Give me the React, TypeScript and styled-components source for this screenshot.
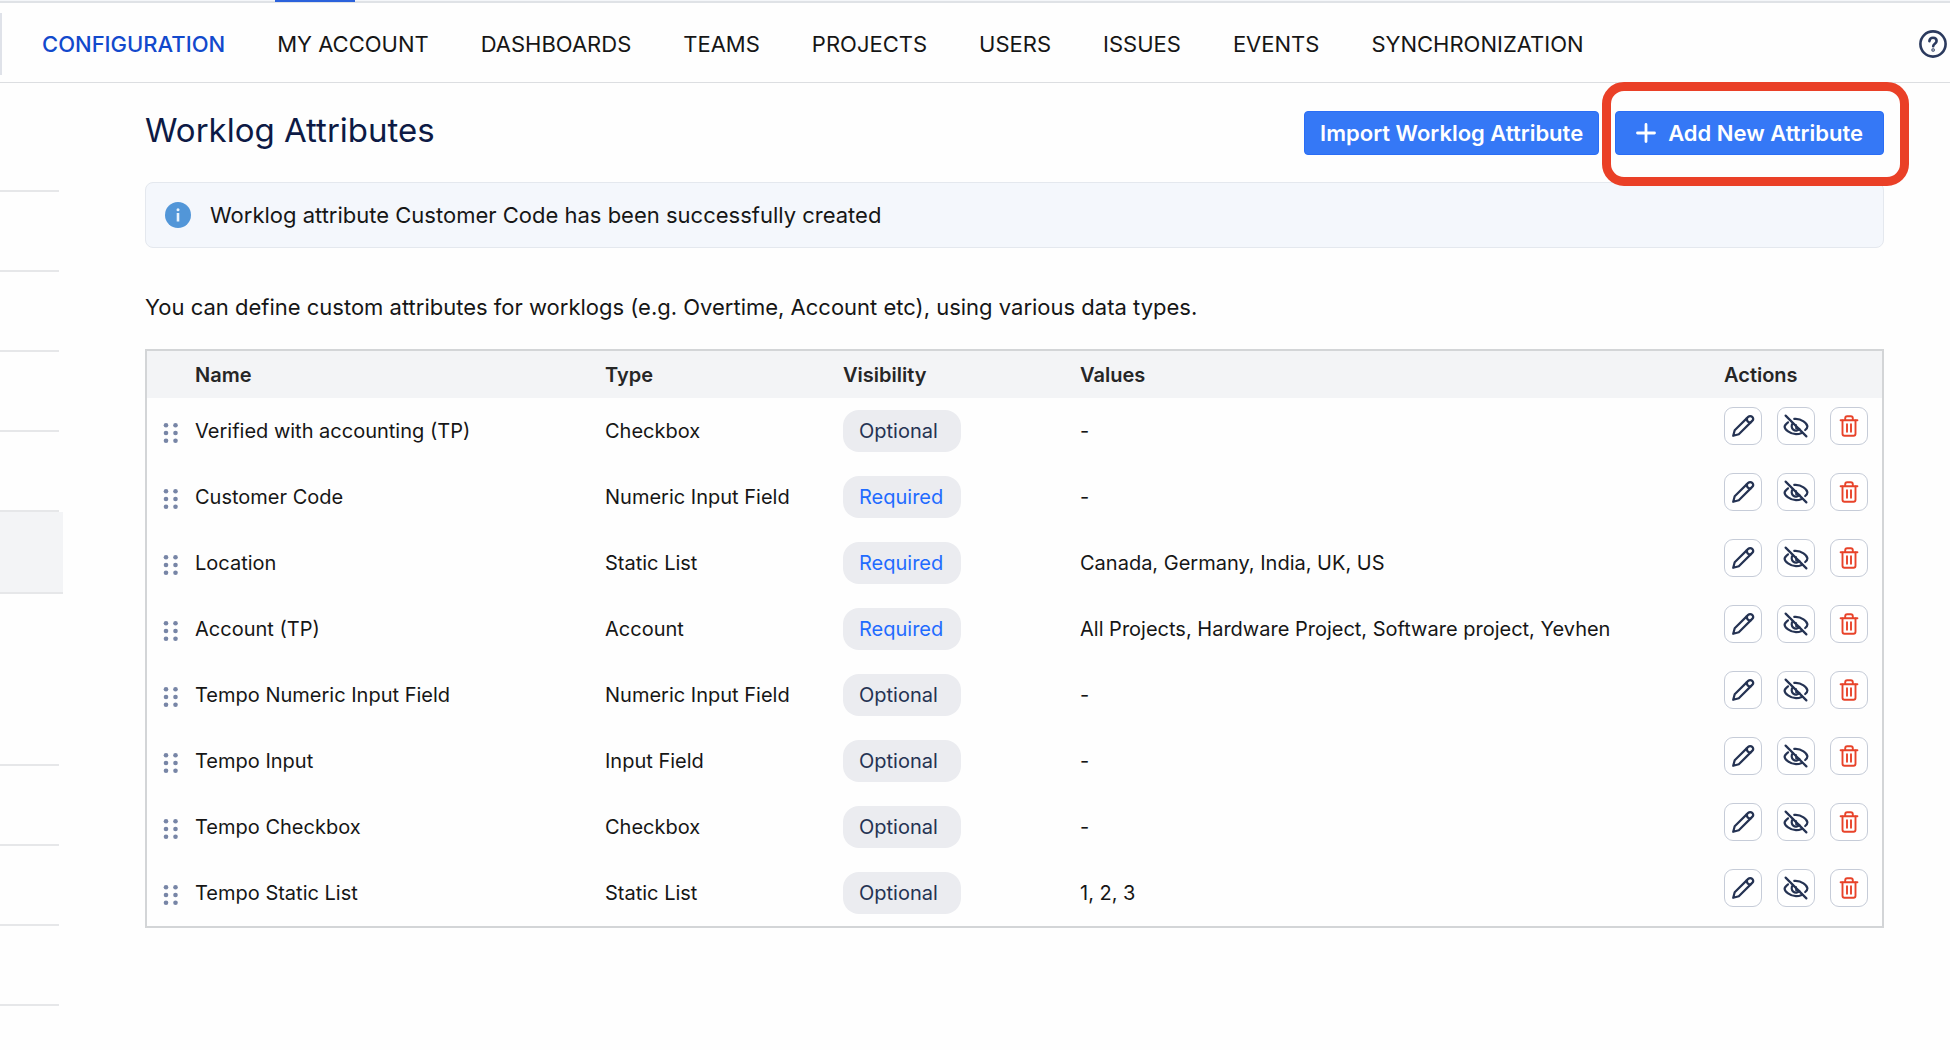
import React from "react";
import styled, { createGlobalStyle } from "styled-components";

const GlobalStyle = createGlobalStyle`
  *, *::before, *::after { box-sizing: border-box; }
  body {
    margin: 0;
    background: #fefefe;
    color: #161616;
    font-family: Inter, "Liberation Sans", sans-serif;
    font-size: 20px;
    line-height: 24px;
  }
  button { font: inherit; cursor: pointer; }
`;

const TopStrip = styled.div`
  height: 3px;
  padding-left: 275px;
  background: #f4f6f9;
  border-bottom: 2px solid #dfe2e6;
`;

const ActiveTab = styled.div`
  position: relative;
  width: 80px;
  height: 2px;
  background: #2b62dc;
`;

const Header = styled.header`
  display: flex;
  align-items: center;
  justify-content: space-between;
  height: 80px;
  padding: 2px 3px 0 0;
  border-bottom: 1px solid #dcdee1;
`;

const Nav = styled.nav`
  display: flex;
  align-items: center;
  gap: 52px;
  height: 62px;
  padding-left: 40px;
  border-left: 2px solid #dfe2e9;
`;

const NavLink = styled.a<{ $active?: boolean }>`
  color: ${(p) => (p.$active ? "#1249cc" : "#161616")};
  font-size: 22px;
  font-weight: ${(p) => (p.$active ? 500 : 400)};
  text-decoration: none;
`;

const IconButton = styled.button`
  display: flex;
  padding: 0;
  border: 0;
  background: none;
  color: #2b3a5e;
`;

const Body = styled.div`
  display: flex;
  align-items: flex-start;
`;

const Sidebar = styled.aside`
  flex: none;
  display: flex;
  flex-direction: column;
  width: 63px;
  padding-top: 29px;
`;

const SideItem = styled.div<{ $active?: boolean; $height?: number }>`
  width: ${(p) => (p.$active ? "63px" : "59px")};
  height: ${(p) => p.$height ?? 80}px;
  border-bottom: 2px solid #e6e7e9;
  background: ${(p) => (p.$active ? "#f3f4f6" : "none")};
`;

const Main = styled.main`
  flex: 1;
  min-width: 0;
  padding: 28px 66px 40px 82px;
`;

const TitleRow = styled.div`
  display: flex;
  align-items: center;
  justify-content: space-between;
  height: 44px;
`;

const Title = styled.h1`
  margin: 0 0 6px;
  color: #0d1a45;
  font-size: 33px;
  line-height: 38px;
  font-weight: 400;
`;

const ButtonGroup = styled.div`
  display: flex;
  gap: 16px;
`;

const PrimaryButton = styled.button<{ $wide?: boolean }>`
  display: flex;
  align-items: center;
  justify-content: center;
  gap: 12px;
  height: 44px;
  padding: 0 ${(p) => (p.$wide ? "20px" : "15px")};
  border: 1px solid #2a6df5;
  border-radius: 4px;
  background: #3578f6;
  color: #fff;
  font-size: 22px;
  font-weight: 600;
`;

const Highlight = styled.div`
  position: relative;
  &::after {
    content: "";
    position: absolute;
    inset: -29px -25px -31px -13px;
    border: 9px solid #ea4027;
    border-radius: 22px;
    pointer-events: none;
  }
`;

const Notice = styled.div`
  display: flex;
  align-items: center;
  gap: 19px;
  height: 66px;
  margin-top: 27px;
  padding: 0 19px;
  border: 1px solid #e4e8ee;
  border-radius: 8px;
  background: #f4f7fc;
  font-size: 22px;
`;

const Description = styled.p`
  margin: 47px 0 30px;
  font-size: 22px;
`;

const Table = styled.table`
  width: 100%;
  table-layout: fixed;
  border: 2px solid #d3d5d7;
  border-collapse: separate;
  border-spacing: 0;
`;

const HeadCell = styled.th<{ $width?: number }>`
  width: ${(p) => (p.$width ? `${p.$width}px` : "auto")};
  height: 47px;
  padding: 0;
  background: #f3f4f6;
  color: #262626;
  font-weight: 600;
  text-align: left;
`;

const Cell = styled.td`
  height: 66px;
  padding: 0;
  vertical-align: middle;
  white-space: nowrap;
`;

const Handle = styled(IconButton)`
  margin: 4px 0 0 16px;
  color: #7785a6;
  cursor: grab;
`;

const Pill = styled.span<{ $required: boolean }>`
  display: block;
  width: 118px;
  padding: 9px 16px;
  border-radius: 16px;
  background: #ebecf0;
  color: ${(p) => (p.$required ? "#1f6bff" : "#253353")};
`;

const Actions = styled.div`
  display: flex;
  gap: 15px;
  padding-bottom: 10px;
`;

const ActionButton = styled.button<{ $danger?: boolean }>`
  display: flex;
  align-items: center;
  justify-content: center;
  width: 38px;
  height: 38px;
  padding: 0;
  border: 1px solid #c6ccd8;
  border-radius: 9px;
  background: #fff;
  color: ${(p) => (p.$danger ? "#e8432a" : "#253353")};
`;

const HelpIcon = () => (
  <svg width="28" height="28" viewBox="0 0 28 28" fill="none" stroke="currentColor" strokeWidth="2.6" strokeLinecap="round" strokeLinejoin="round" aria-hidden>
    <circle cx="14" cy="14" r="12.6" />
    <path d="M10.4 11.2c.2-2.1 1.7-3.4 3.6-3.4 2.1 0 3.6 1.3 3.6 3.2 0 2.7-3.4 2.7-3.4 5.2" />
    <circle cx="14.1" cy="20" r=".5" />
  </svg>
);

const InfoIcon = () => (
  <svg width="26" height="26" viewBox="0 0 26 26" aria-hidden>
    <circle cx="13" cy="13" r="13" fill="#5296d8" />
    <path d="M13 11v8.5" stroke="#e8f3fd" strokeWidth="2.6" />
    <circle cx="13" cy="7.8" r="1.5" fill="#e8f3fd" />
  </svg>
);

const PlusIcon = () => (
  <svg width="20" height="20" viewBox="0 0 20 20" fill="none" stroke="currentColor" strokeWidth="2.8" strokeLinecap="round" aria-hidden>
    <path d="M10 1.5v17M1.5 10h17" />
  </svg>
);

const DragIcon = () => (
  <svg width="16" height="22" viewBox="0 0 16 22" fill="currentColor" aria-hidden>
    {[3.3, 11, 18.7].map((y) => (
      <React.Fragment key={y}>
        <circle cx="3" cy={y} r="2.3" />
        <circle cx="12.5" cy={y} r="2.3" />
      </React.Fragment>
    ))}
  </svg>
);

const PencilIcon = () => (
  <svg width="24" height="24" viewBox="0 0 24 24" fill="none" stroke="currentColor" strokeWidth="2.2" strokeLinejoin="round" strokeLinecap="round" aria-hidden>
    <path d="M2.2 21.8l1.5-5.6L17.2 2.9a2.8 2.8 0 0 1 4 4L7.8 20.3z" />
    <path d="M15.6 4.6c.2 2.2 1.6 3.7 3.8 4" />
  </svg>
);

const HiddenIcon = () => (
  <svg width="26" height="26" viewBox="0 0 26 26" fill="none" stroke="currentColor" strokeWidth="2.2" strokeLinecap="round" strokeLinejoin="round" aria-hidden>
    <path d="M2.6 2.6l20.8 20.8" />
    <path d="M5 9.3C3 10.9 1.6 12.5 1.6 13.7c0 2.6 5.5 7.5 11.4 7.5 2.1 0 4-.5 5.7-1.3" />
    <path d="M11.3 5.900c7.1-.7 13.1 4.600 13.1 7.600 0 1-.8 2.300-2.200 3.500" />
    <path d="M9.7 10.4a4.3 4.3 0 1 0 6.7 5.6" />
    <path d="M13 11.8v3.600l3 .7" strokeWidth="1.6" />
  </svg>
);

const TrashIcon = () => (
  <svg width="22" height="24" viewBox="0 0 22 24" fill="none" stroke="currentColor" strokeWidth="1.9" strokeLinecap="round" strokeLinejoin="round" aria-hidden>
    <path d="M2.6 6.2h16.8" />
    <path d="M7.2 6V4.200c0-1.2.8-2 2-2h3.600c1.2 0 2 .8 2 2V6" />
    <path d="M4.5 6.5v13.2c0 1.2.8 2 2 2h9c1.2 0 2-.8 2-2V6.5" />
    <path d="M9 10.3v7.4M13 10.3v7.4" />
  </svg>
);

const navItems = [
  "CONFIGURATION",
  "MY ACCOUNT",
  "DASHBOARDS",
  "TEAMS",
  "PROJECTS",
  "USERS",
  "ISSUES",
  "EVENTS",
  "SYNCHRONIZATION",
];

const attributes = [
  { name: "Verified with accounting (TP)", type: "Checkbox", required: false, values: "-" },
  { name: "Customer Code", type: "Numeric Input Field", required: true, values: "-" },
  { name: "Location", type: "Static List", required: true, values: "Canada, Germany, India, UK, US" },
  { name: "Account (TP)", type: "Account", required: true, values: "All Projects, Hardware Project, Software project, Yevhen" },
  { name: "Tempo Numeric Input Field", type: "Numeric Input Field", required: false, values: "-" },
  { name: "Tempo Input", type: "Input Field", required: false, values: "-" },
  { name: "Tempo Checkbox", type: "Checkbox", required: false, values: "-" },
  { name: "Tempo Static List", type: "Static List", required: false, values: "1, 2, 3" },
];

export default function App() {
  return (
    <>
      <GlobalStyle />
      <TopStrip>
        <ActiveTab />
      </TopStrip>
      <Header>
        <Nav>
          {navItems.map((item, i) => (
            <NavLink key={item} href="#" $active={i === 0}>
              {item}
            </NavLink>
          ))}
        </Nav>
        <IconButton aria-label="Help">
          <HelpIcon />
        </IconButton>
      </Header>
      <Body>
        <Sidebar>
          <SideItem />
          <SideItem />
          <SideItem />
          <SideItem />
          <SideItem />
          <SideItem $active $height={82} />
          <SideItem $height={172} />
          <SideItem />
          <SideItem />
          <SideItem />
        </Sidebar>
        <Main>
          <TitleRow>
            <Title>Worklog Attributes</Title>
            <ButtonGroup>
              <PrimaryButton>Import Worklog Attribute</PrimaryButton>
              <Highlight>
                <PrimaryButton $wide>
                  <PlusIcon />
                  Add New Attribute
                </PrimaryButton>
              </Highlight>
            </ButtonGroup>
          </TitleRow>
          <Notice role="status">
            <InfoIcon />
            Worklog attribute Customer Code has been successfully created
          </Notice>
          <Description>
            You can define custom attributes for worklogs (e.g. Overtime, Account etc), using various data types.
          </Description>
          <Table>
            <thead>
              <tr>
                <HeadCell $width={48} />
                <HeadCell $width={410}>Name</HeadCell>
                <HeadCell $width={238}>Type</HeadCell>
                <HeadCell $width={237}>Visibility</HeadCell>
                <HeadCell>Values</HeadCell>
                <HeadCell $width={158}>Actions</HeadCell>
              </tr>
            </thead>
            <tbody>
              {attributes.map((row) => (
                <tr key={row.name}>
                  <Cell>
                    <Handle aria-label={`Move ${row.name}`}>
                      <DragIcon />
                    </Handle>
                  </Cell>
                  <Cell>{row.name}</Cell>
                  <Cell>{row.type}</Cell>
                  <Cell>
                    <Pill $required={row.required}>{row.required ? "Required" : "Optional"}</Pill>
                  </Cell>
                  <Cell>{row.values}</Cell>
                  <Cell>
                    <Actions>
                      <ActionButton aria-label={`Edit ${row.name}`}>
                        <PencilIcon />
                      </ActionButton>
                      <ActionButton aria-label={`Hide ${row.name}`}>
                        <HiddenIcon />
                      </ActionButton>
                      <ActionButton aria-label={`Delete ${row.name}`} $danger>
                        <TrashIcon />
                      </ActionButton>
                    </Actions>
                  </Cell>
                </tr>
              ))}
            </tbody>
          </Table>
        </Main>
      </Body>
    </>
  );
}
